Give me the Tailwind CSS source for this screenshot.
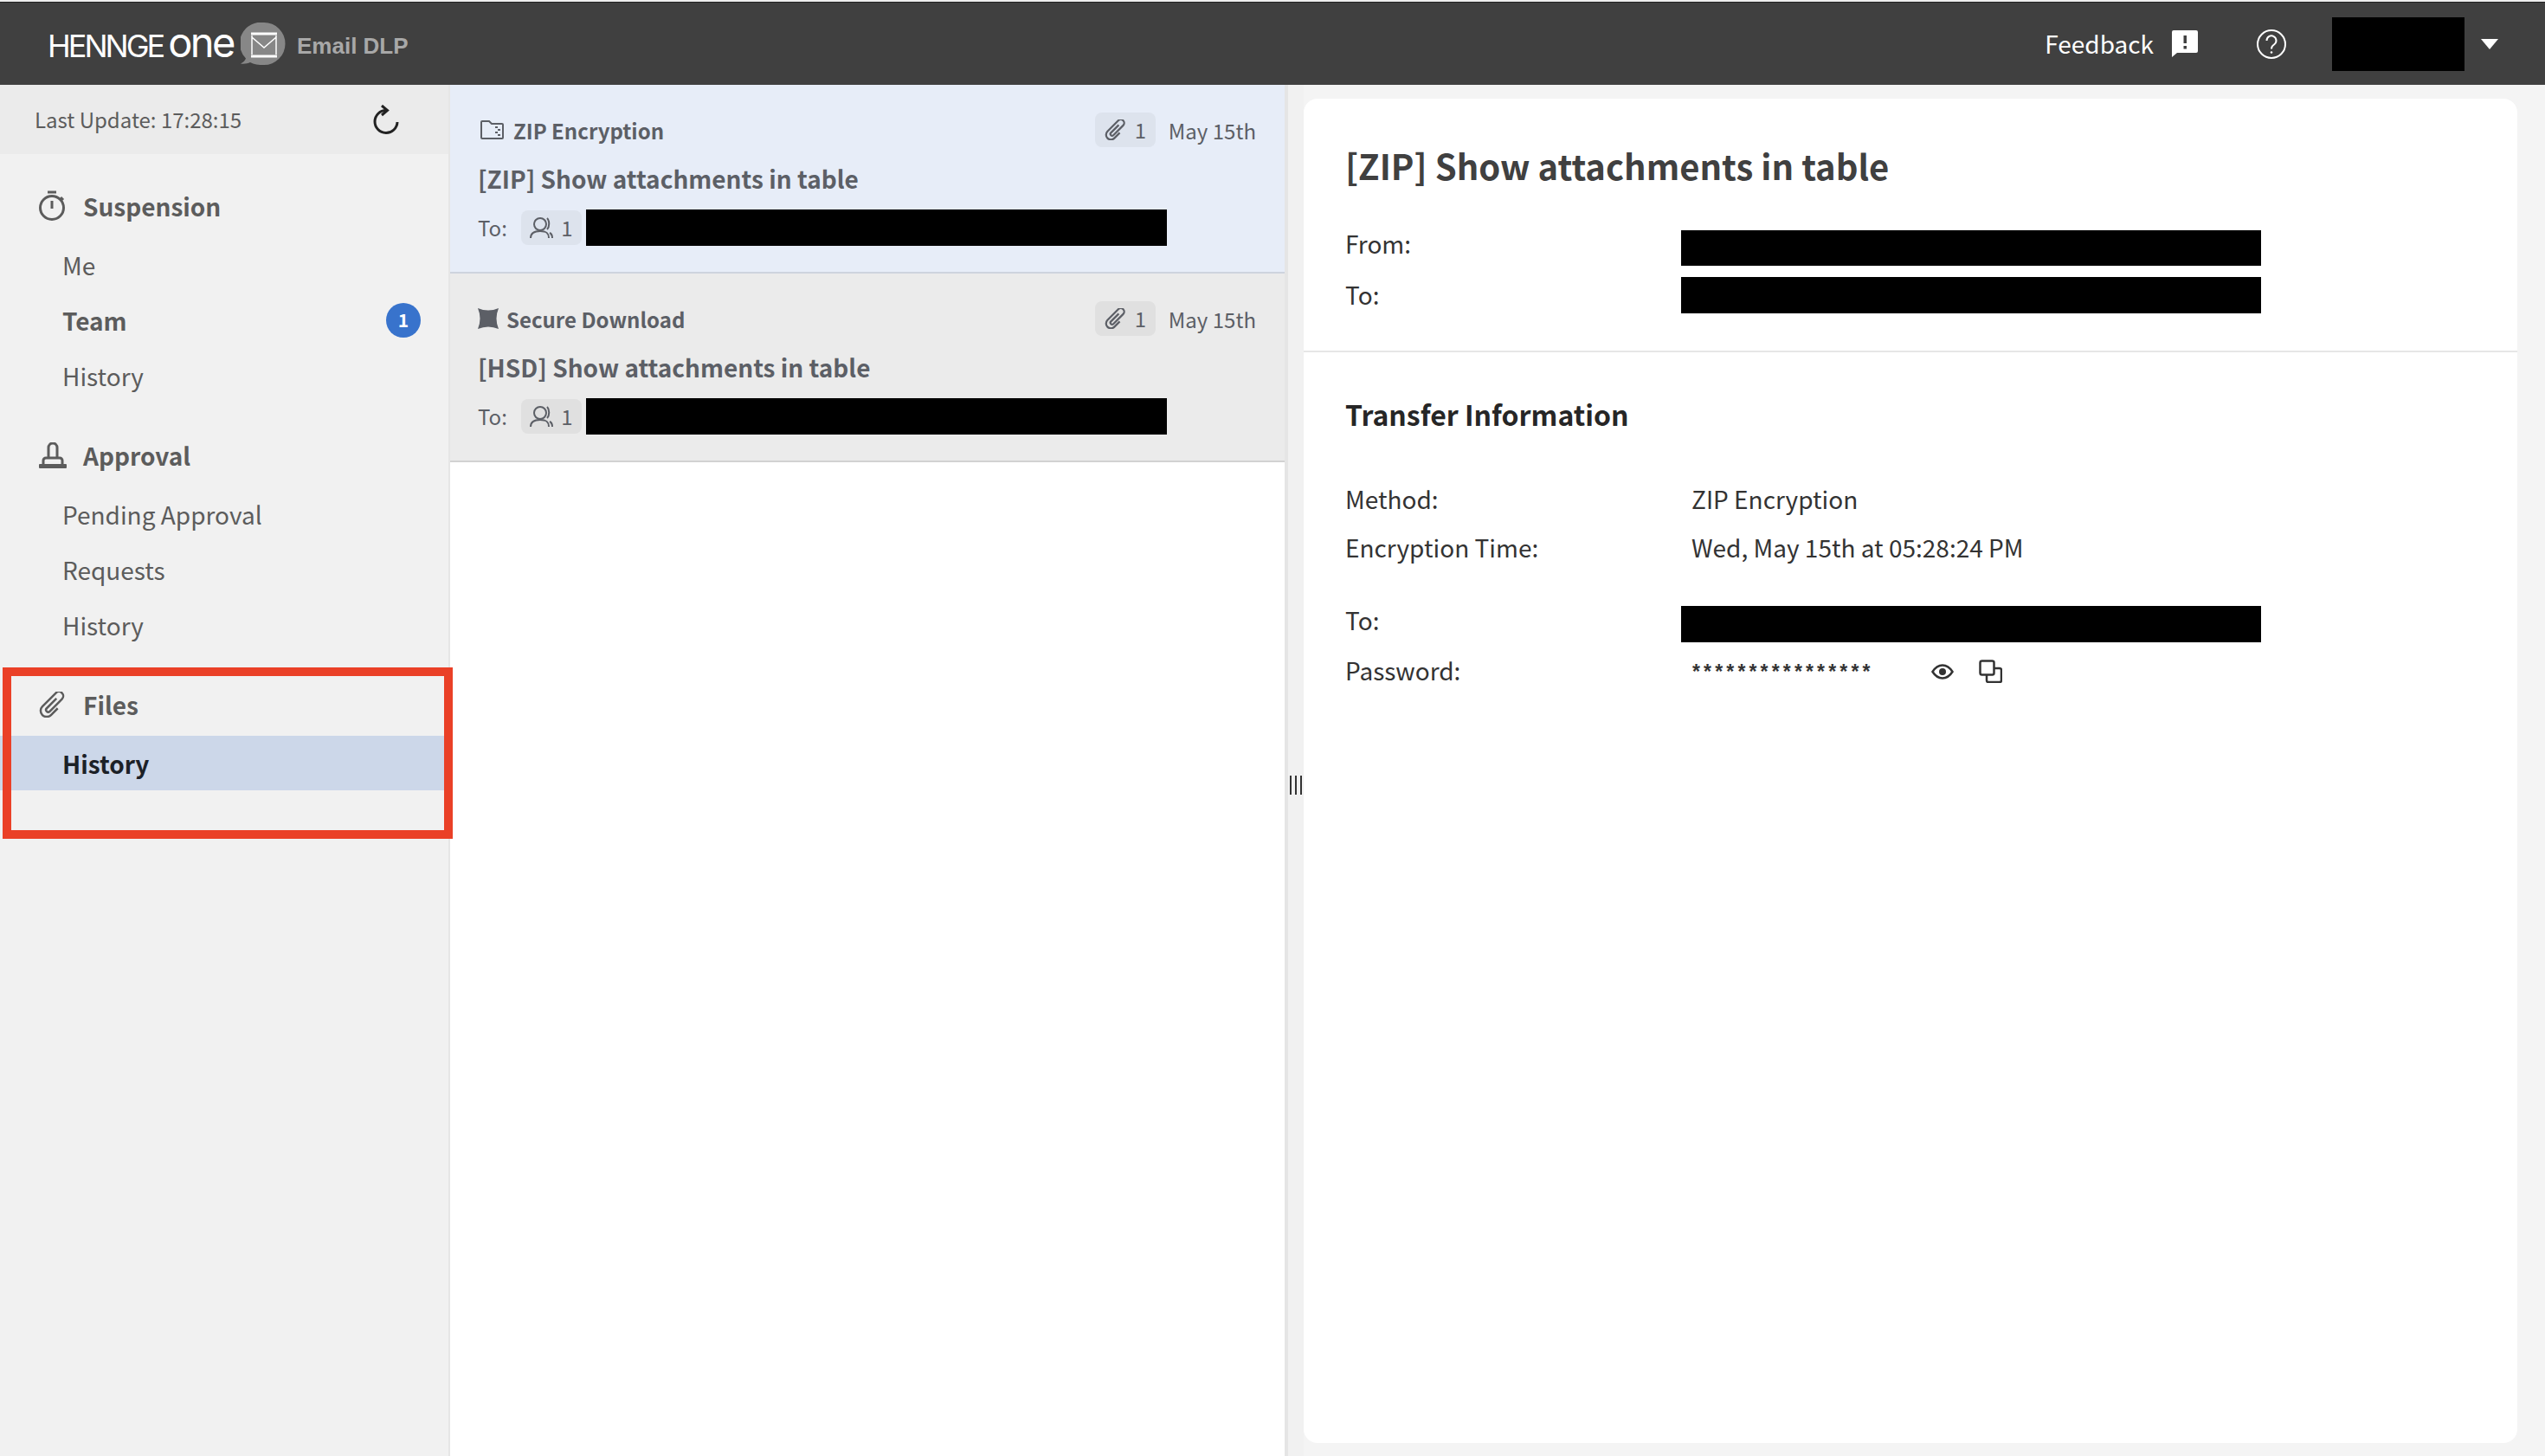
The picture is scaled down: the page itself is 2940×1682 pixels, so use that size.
<!DOCTYPE html>
<html lang="en">
	<head>
		<meta charset="UTF-8" />
		<title>HENNGE One Email DLP</title>
		<script src="https://cdn.jsdelivr.net/npm/@tailwindcss/browser@4"></script>
	</head>
	<body class="relative h-screen flex flex-col overflow-hidden bg-white text-[#333] font-['Noto_Sans_CJK_JP','Noto_Sans',sans-serif]">
		<div class="h-[2px] bg-[#eeeeee]"></div>
		<div class="h-px bg-[#222]"></div>

		<!-- Navbar -->
		<header class="h-[95px] shrink-0 bg-[#404040] flex items-center justify-between text-white">
			<div class="flex items-center pl-[55px] pt-[5px]">
				<span class="font-['Inter',sans-serif] text-[36px] leading-none tracking-[-3px]">HENNGE</span>
				<span class="font-['Inter',sans-serif] text-[47px] leading-none tracking-[-2.500px] ml-[6px] -mt-[9px]">one</span>
				<svg class="w-[52px] h-[49px] ml-[8px] -mt-[5px]" viewBox="0 0 52 49">
					<path d="M27 0a24.500 24.500 0 0 1 0 49c-6 0-12-.5-16-3-3 1.500-7 2-11 1.500 3-1.500 5-3.500 6-6A24.500 24.500 0 0 1 27 0z" fill="#878787" />
					<path d="M12 13h30M12 39h30" stroke="#fff" stroke-width="3" />
					<path d="M13 15v22M41 15v22M13 17l14 12 14-12" stroke="#fff" stroke-width="1.500" fill="none" />
				</svg>
				<span class="font-['Liberation_Sans',sans-serif] font-bold text-[26px] text-[#a8a8a8] ml-[13px]">Email DLP</span>
			</div>
			<div class="flex items-center">
				<span class="text-[28px] leading-none -mt-[2px]">Feedback</span>
				<svg class="w-[30px] h-[31px] ml-[21px]" viewBox="0 0 30 31">
					<path d="M2 0h26a2 2 0 0 1 2 2v22a2 2 0 0 1-2 2H6l-6 5V2a2 2 0 0 1 2-2z" fill="#fff" />
					<rect x="13.500" y="6" width="3.500" height="9" fill="#404040" />
					<rect x="13.500" y="18" width="3.500" height="3.500" fill="#404040" />
				</svg>
				<svg class="w-[34px] h-[34px] ml-[68px]" viewBox="0 0 34 34" fill="none" stroke="#fff">
					<circle cx="17" cy="17" r="16" stroke-width="2" />
					<path d="M11.500 13a5.500 5.500 0 1 1 8.500 4.500c-2 1.300-3 2.300-3 5" stroke-width="2" />
					<circle cx="17" cy="26.500" r="1.300" fill="#fff" stroke="none" />
				</svg>
				<div class="w-[153px] h-[62px] bg-black ml-[53px]"></div>
				<div class="w-0 h-0 ml-[19px] mr-[54px] border-x-[10px] border-x-transparent border-t-[12px] border-t-white"></div>
			</div>
		</header>

		<div class="flex-1 flex min-h-0">
			<!-- Sidebar -->
			<aside class="w-[520px] shrink-0 bg-[#f1f1f1] border-r-2 border-[#e6e6e6] text-[#5c5c5c]">
				<div class="h-[80px] bg-[#ebebeb] flex items-center justify-between pl-[40px] pr-[57px]">
					<span class="text-[24px] leading-none">Last Update: 17:28:15</span>
					<svg class="w-[30px] h-[34px]" viewBox="0 0 30 34" fill="none" stroke="#222" stroke-width="3">
						<path d="M15 6.500A13 13 0 1 0 28 20" />
						<path d="M10 1l6.500 5.500L10 12" />
					</svg>
				</div>

				<div class="pt-[40px]">
					<div class="h-[40px] flex items-center pl-[45px] font-bold text-[28px]">
						<svg class="w-[30px] h-[36px] mr-[21px]" viewBox="0 0 30 36" fill="none" stroke="#5c5c5c" stroke-width="3">
							<path d="M10 2h10" />
							<circle cx="15" cy="20" r="13.500" />
							<path d="M15 12v9M25 8l3 3" />
						</svg>
						Suspension
					</div>
					<div class="h-[64px] flex items-center pl-[72px] text-[28px] mt-[16px]">Me</div>
					<div class="h-[64px] flex items-center justify-between pl-[72px] pr-[32px] text-[28px] font-bold">
						Team
						<span class="w-[40px] h-[40px] rounded-full bg-[#3873cc] text-white text-[21px] flex items-center justify-center">1</span>
					</div>
					<div class="h-[64px] flex items-center pl-[72px] text-[28px]">History</div>
				</div>

				<div class="pt-[40px]">
					<div class="h-[40px] flex items-center pl-[45px] font-bold text-[28px]">
						<svg class="w-[32px] h-[30px] mr-[19px]" viewBox="0 0 32 30" fill="none" stroke="#5c5c5c" stroke-width="3">
							<path d="M11 18V6a5 5 0 0 1 10 0v12" />
							<path d="M5 25v-4a3 3 0 0 1 3-3h16a3 3 0 0 1 3 3v4" />
							<rect x="0" y="25" width="32" height="5" rx="1" fill="#5c5c5c" stroke="none" />
						</svg>
						Approval
					</div>
					<div class="h-[64px] flex items-center pl-[72px] text-[28px] mt-[16px]">Pending Approval</div>
					<div class="h-[64px] flex items-center pl-[72px] text-[28px]">Requests</div>
					<div class="h-[64px] flex items-center pl-[72px] text-[28px]">History</div>
				</div>

				<div class="pt-[40px]">
					<div class="h-[40px] flex items-center pl-[45px] font-bold text-[28px]">
						<svg class="w-[32px] h-[30px] mr-[19px]" viewBox="0 0 32 30" fill="none" stroke="#5c5c5c" stroke-width="2.500">
							<path transform="rotate(45 16 15)" d="M14 7V23a2.500 2.500 0 0 0 5 0V3a5 5 0 0 0-10 0V25a7 7 0 0 0 14 0V14" />
						</svg>
						Files
					</div>
					<div class="h-[63px] flex items-center pl-[72px] text-[28px] font-bold text-[#1c2127] bg-[#ccd7e9] mt-[16px]">History</div>
				</div>
			</aside>

			<!-- Message list -->
			<section class="w-[964px] shrink-0 bg-white text-[#5c5f66]">
				<div class="h-[218px] bg-[#e7edf8] border-b-2 border-[#ced3de] pl-[32px] pr-[33px] pt-[32px]">
					<div class="h-[40px] flex items-center justify-between">
						<div class="flex items-center font-bold text-[24px] pt-[2px]">
							<svg class="w-[27px] h-[22px] mr-[11px] -mt-[2px] ml-[3px]" viewBox="0 0 27 22" fill="none" stroke="#5c5f66" stroke-width="2">
								<path d="M1 20V2a1 1 0 0 1 1-1h8l3 3h12a1 1 0 0 1 1 1v15a1 1 0 0 1-1 1H2a1 1 0 0 1-1-1z" />
								<path d="M17 8h3M20 11h3M17 14h3M20 17h3" />
							</svg>
							ZIP Encryption
						</div>
						<div class="flex items-center">
							<div class="w-[70px] h-[40px] rounded-[8px] bg-[#dde3ed] flex items-center justify-center gap-[9px] text-[24px]">
								<svg class="w-[26px] h-[24px]" viewBox="0 0 32 30" fill="none" stroke="#5c5f66" stroke-width="2.800">
									<path transform="rotate(45 16 15)" d="M14 7V23a2.500 2.500 0 0 0 5 0V3a5 5 0 0 0-10 0V25a7 7 0 0 0 14 0V14" />
								</svg>
								1
							</div>
							<span class="text-[24px] ml-[15px] pt-[2px]">May 15th</span>
						</div>
					</div>
					<div class="h-[36px] mt-[18px] flex items-center font-bold text-[28px]">[ZIP] Show attachments in table</div>
					<div class="flex items-center mt-[18px]">
						<span class="text-[24px] w-[50px]">To:</span>
						<div class="w-[70px] h-[40px] rounded-[8px] bg-[#dde3ed] flex items-center justify-center gap-[9px] text-[24px]">
							<svg class="w-[27px] h-[26px]" viewBox="0 0 27 26" fill="none" stroke="#5c5f66" stroke-width="2">
								<circle cx="12" cy="9" r="7" />
								<path d="M1 25c0-6 4-8 11-8s10 2 10 8M20 2c3 3 3 10 0 13M23 19c2 1 3 3 3 6" />
							</svg>
							1
						</div>
						<div class="w-[671px] h-[42px] bg-black ml-[5px]"></div>
					</div>
				</div>
				<div class="h-[218px] bg-[#ebebeb] border-b-2 border-[#d2d2d2] pl-[32px] pr-[33px] pt-[32px]">
					<div class="h-[40px] flex items-center justify-between">
						<div class="flex items-center font-bold text-[24px] pt-[2px]">
							<svg class="w-[24px] h-[24px] mr-[9px] -mt-[2px]" viewBox="0 0 24 24" fill="#5c5f66">
								<path d="M0 0Q12 5 24 0Q19 12 24 24Q12 19 0 24Q5 12 0 0z" />
							</svg>
							Secure Download
						</div>
						<div class="flex items-center">
							<div class="w-[70px] h-[40px] rounded-[8px] bg-[#e0e0e0] flex items-center justify-center gap-[9px] text-[24px]">
								<svg class="w-[26px] h-[24px]" viewBox="0 0 32 30" fill="none" stroke="#5c5f66" stroke-width="2.800">
									<path transform="rotate(45 16 15)" d="M14 7V23a2.500 2.500 0 0 0 5 0V3a5 5 0 0 0-10 0V25a7 7 0 0 0 14 0V14" />
								</svg>
								1
							</div>
							<span class="text-[24px] ml-[15px] pt-[2px]">May 15th</span>
						</div>
					</div>
					<div class="h-[36px] mt-[18px] flex items-center font-bold text-[28px]">[HSD] Show attachments in table</div>
					<div class="flex items-center mt-[18px]">
						<span class="text-[24px] w-[50px]">To:</span>
						<div class="w-[70px] h-[40px] rounded-[8px] bg-[#e0e0e0] flex items-center justify-center gap-[9px] text-[24px]">
							<svg class="w-[27px] h-[26px]" viewBox="0 0 27 26" fill="none" stroke="#5c5f66" stroke-width="2">
								<circle cx="12" cy="9" r="7" />
								<path d="M1 25c0-6 4-8 11-8s10 2 10 8M20 2c3 3 3 10 0 13M23 19c2 1 3 3 3 6" />
							</svg>
							1
						</div>
						<div class="w-[671px] h-[42px] bg-black ml-[5px]"></div>
					</div>
				</div>
			</section>

			<!-- Splitter -->
			<div class="w-[22px] shrink-0 bg-[#f1f1f1] border-l-4 border-[#e5e5e5] flex items-center pl-[2px] gap-[4px] pt-[34px]">
				<div class="w-[2px] h-[22px] bg-[#333]"></div>
				<div class="w-[2px] h-[22px] bg-[#333]"></div>
				<div class="w-[2px] h-[22px] bg-[#333]"></div>
			</div>

			<!-- Detail -->
			<main class="flex-1 bg-[#f4f4f4] pt-[16px] pr-[32px] pb-[15px] min-w-0">
				<div class="h-full bg-white rounded-[16px]">
					<div class="h-[293px] border-b-2 border-[#e6e6e6] pl-[48px] pt-[47px]">
						<h1 class="h-[60px] flex items-center font-bold text-[40px] leading-none text-[#404040]">[ZIP] Show attachments in table</h1>
						<div class="grid grid-cols-[388px_670px] items-center mt-[45px] text-[28px] leading-none">
							<span class="pb-[12px]">From:</span>
							<div class="h-[41px] bg-black"></div>
						</div>
						<div class="grid grid-cols-[388px_670px] items-center mt-[13px] text-[28px] leading-none">
							<span class="pb-[2px]">To:</span>
							<div class="h-[42px] bg-black"></div>
						</div>
					</div>
					<div class="pl-[48px] pt-[49px] text-[28px] leading-none">
						<h2 class="h-[44px] flex items-center font-bold text-[32px] text-[#262626]">Transfer Information</h2>
						<div class="grid grid-cols-[400px_1fr] h-[56px] items-center mt-[48px]">
							<span>Method:</span>
							<span>ZIP Encryption</span>
						</div>
						<div class="grid grid-cols-[400px_1fr] h-[56px] items-center">
							<span>Encryption Time:</span>
							<span>Wed, May 15th at 05:28:24 PM</span>
						</div>
						<div class="grid grid-cols-[388px_670px] items-center mt-[40px]">
							<span class="pb-[10px]">To:</span>
							<div class="h-[42px] bg-black"></div>
						</div>
						<div class="grid grid-cols-[400px_1fr] items-center mt-[13px] h-[47px]">
							<span class="pb-[10px]">Password:</span>
							<div class="flex items-center pb-[6px]">
								<span class="w-[276px] ml-[1px] pt-[2px] font-['Liberation_Sans',sans-serif] font-bold text-[23px] tracking-[4.150px]">****************</span>
								<svg class="w-[26px] h-[18px]" viewBox="0 0 26 18" fill="none" stroke="#333" stroke-width="2.500">
									<path d="M1.500 9C5 3.500 9 1.500 13 1.500S21 3.500 24.500 9C21 14.500 17 16.500 13 16.500S5 14.500 1.500 9z" />
									<circle cx="13" cy="9" r="4" fill="#333" stroke="none" />
								</svg>
								<svg class="w-[27px] h-[27px] ml-[29px]" viewBox="0 0 27 27" fill="none" stroke="#333" stroke-width="2.500">
									<rect x="1.500" y="1.500" width="16" height="16" rx="2" />
									<path d="M18 10h6a2 2 0 0 1 2 2v12a2 2 0 0 1-2 2H11a2 2 0 0 1-2-2v-6" />
								</svg>
							</div>
						</div>
					</div>
				</div>
			</main>
		</div>

		<!-- Annotation box over the Files section -->
		<div class="absolute left-[3px] top-[771px] w-[520px] h-[198px] border-[10px] border-[#ea4027]"></div>
	</body>
</html>
